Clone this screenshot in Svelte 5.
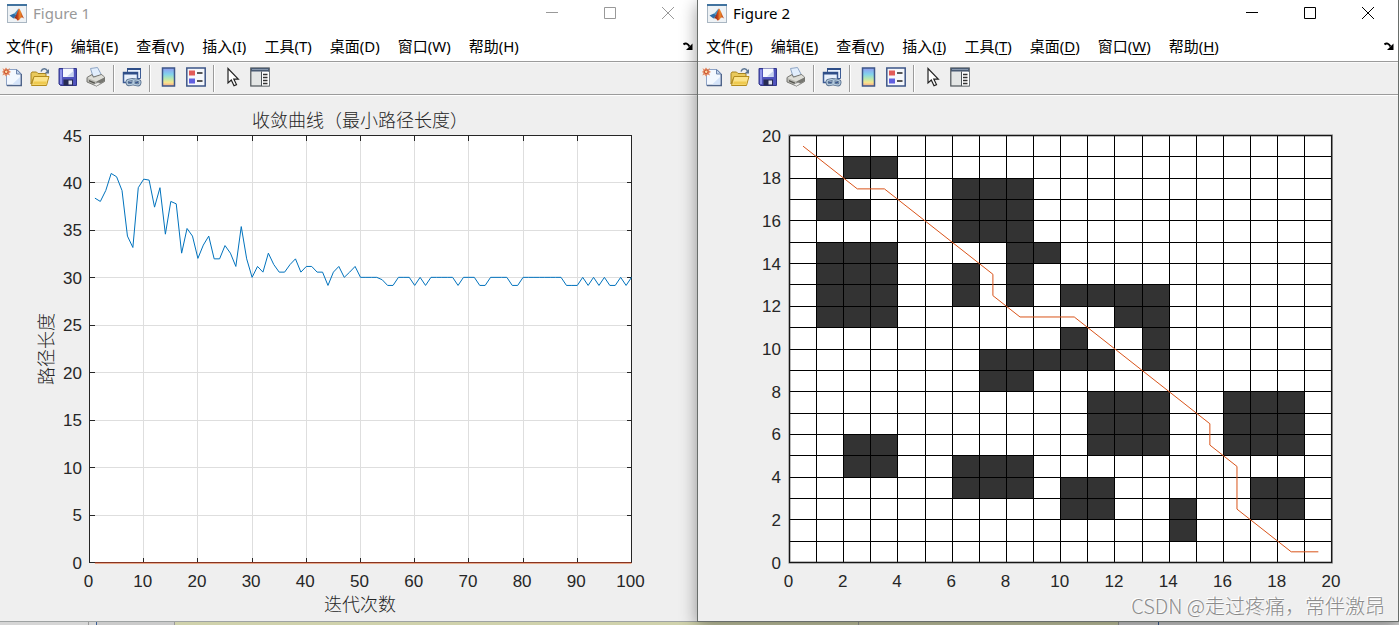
<script>
  const menus = [
    ['文件', 'F'], ['编辑', 'E'], ['查看', 'V'], ['插入', 'I'],
    ['工具', 'T'], ['桌面', 'D'], ['窗口', 'W'], ['帮助', 'H']
  ];

  const tools = [
    ['new', '新建'], ['open', '打开'], ['save', '保存'], ['print', '打印'], null,
    ['link', '链接绘图'], null,
    ['colorbar', '颜色栏'], ['legend', '图例'], null,
    ['cursor', '编辑绘图'], ['panel', '属性检查器']
  ];

  const windows = [
    { id: 1, title: 'Figure 1', active: false },
    { id: 2, title: 'Figure 2', active: true }
  ];

  // Best path length after each iteration
  const lengths = [
    38.4, 38.05, 39.2, 41, 40.65, 39.2, 34.4, 33.2, 39.5, 40.4,
    40.3, 37.45, 39.5, 34.6, 38.05, 37.8, 32.6, 35.2, 34.4, 32.05,
    33.45, 34.4, 32, 32, 33.4, 32.6, 31.2, 35.4, 32, 30.05,
    31.2, 30.6, 32.6, 31.4, 30.6, 30.6, 31.4, 32, 30.6, 31.2,
    31.2, 30.6, 30.6, 29.2, 30.6, 31.2, 30.05, 30.6, 31.2, 30.05,
    30.05, 30.05, 30.05, 29.8, 29.2, 29.2, 30.05, 30.05, 30.05, 29.2,
    30.05, 29.2, 30.05, 30.05, 30.05, 30.05, 30.05, 29.2, 30.05, 30.05,
    30.05, 29.2, 29.2, 30.05, 30.05, 30.05, 30.05, 29.2, 29.2, 30.05,
    30.05, 30.05, 30.05, 30.05, 30.05, 30.05, 30.05, 29.2, 29.2, 29.2,
    30.05, 29.2, 30.05, 29.2, 30.05, 29.2, 29.2, 30.05, 29.2, 30.05
  ];

  // Obstacles as [x, y, width, height] in map cells
  const blocks = [
    [2, 18, 2, 1], [1, 16, 1, 2], [2, 16, 1, 1], [1, 11, 3, 4], [2, 4, 2, 2],
    [6, 15, 3, 3], [8, 12, 1, 3], [9, 14, 1, 1], [6, 12, 1, 2], [10, 12, 4, 1],
    [12, 11, 2, 1], [13, 9, 1, 2], [10, 10, 1, 1], [7, 9, 5, 1], [7, 8, 2, 1],
    [11, 5, 3, 3], [16, 5, 3, 3], [6, 3, 3, 2], [10, 2, 2, 2], [14, 1, 1, 2],
    [17, 2, 2, 2]
  ];

  const route = [
    [0.5, 19.5], [2.5, 17.5], [3.5, 17.5], [7.5, 13.5], [7.5, 12.5], [8.5, 11.5],
    [10.5, 11.5], [15.5, 6.5], [15.5, 5.5], [16.5, 4.5], [16.5, 2.5], [18.5, 0.5], [19.5, 0.5]
  ];

  const range = (n, step = 1) => Array.from({ length: n }, (_, i) => i * step);

  const TOP = 39.5;
  const BOTTOM = 466.5;
  const H = BOTTOM - TOP;

  const ax = (v) => 89.5 + v * 5.42;
  const ay = (v) => BOTTOM - (v * H) / 45;
  const bx = (v) => 91.5 + v * 27.12;
  const by = (v) => BOTTOM - (v * H) / 20;

  const curve = lengths.map((v, i) => `${ax(i + 1)},${ay(v)}`).join(' ');
  const track = route.map(([x, y]) => `${bx(x)},${by(y)}`).join(' ');
</script>

{#snippet icon(name)}
  <svg class="icon" viewBox="0 0 20 20" aria-hidden="true">
    {#if name === 'new'}
      <path d="M4.500 2.500H15L19 6.500V18.500H4.500z" fill="#f3f8ff" stroke="#8ea3c6" />
      <path d="M5 18.500H19.500V7" fill="none" stroke="#4f6489" stroke-width="1.500" />
      <path d="M14.500 2.500V7H19z" fill="#c3d5ee" stroke="#6f86ae" />
      <path d="M10 17.500H18V10z" fill="#d5e4fa" />
      <path d="M0.500 1l2 1.500L4 .5l1.500 2L8 1 7 3.500 9 5 7 6l1 2.500L5.500 7.500 4 9.500 2.500 7.500 .3 8.500 1.500 6 0 5l1.500-1.500z" fill="#e38a62" />
      <circle cx="4.200" cy="4.800" r="1.800" fill="#fbd7a0" stroke="#cb4e2c" />
    {:else if name === 'open'}
      <path d="M1 6.500l1-1.500h4.500L8 6.500h8V10H4L1 17z" fill="#e9c95c" stroke="#a8841f" />
      <path d="M1.500 18.500L4 9.500h15l-2.500 9z" fill="#fbe389" stroke="#b48c1c" />
      <path d="M3 17.500h13l.7-3H3.800z" fill="#efca50" />
      <path d="M11 4.500C12.500 1 16 1 17.500 4" fill="none" stroke="#5c7593" stroke-width="1.500" />
      <path d="M19 2v4.500h-4.500z" fill="#5c7593" />
    {:else if name === 'save'}
      <path d="M1 1.500h17.500v17H2.500L1 17z" fill="#5054bd" stroke="#33378c" />
      <path d="M2 2.500h2V17H2z" fill="#8c91e8" />
      <path d="M5 1.500h10.500V10H5z" fill="#f5f8ff" />
      <path d="M9 9.500L15.500 4V10z" fill="#c7d3f0" />
      <path d="M5.500 12.500H15v6H5.500z" fill="#272b52" />
      <path d="M10.500 13.500h3.500v4h-3.500z" fill="#dfe3ef" />
    {:else if name === 'print'}
      <path d="M4.500 1.500l7-1 4 7.500-8 3z" fill="#e2eefc" stroke="#8ea5c4" />
      <path d="M1 10.500l5-3 1.500 2.500 8-2.500 3 2.500v4.500l-8 4.500-9.500-4z" fill="#b9b9b3" stroke="#777772" />
      <path d="M1.500 11l9 3.500 8-4-3-2.500-8 3-2-2.500z" fill="#deded8" />
      <path d="M10.500 14.500v4l8-4.500v-3.500z" fill="#777772" />
      <path d="M3 13l6 2.500v1.500L3 14.500z" fill="#55554f" />
      <path d="M7 17.500l5-2 3 1-4.500 2.500z" fill="#efefec" stroke="#888" stroke-width=".5" />
    {:else if name === 'link'}
      <path d="M5.500 1.500h13v10h-13z" fill="#e8f0fc" stroke="#3c5b94" />
      <path d="M5 1h14v2H5z" fill="#2f4e88" />
      <path d="M1.500 5.500h14v10h-14z" fill="#e8f0fc" stroke="#3c5b94" stroke-width="1.500" />
      <path d="M1 5h15v2.500H1z" fill="#2f4e88" />
      <g fill="none" stroke="#59718f" stroke-width="3">
        <rect x="5" y="13" width="7" height="4.500" rx="2.200" transform="rotate(-12 8 15)" />
        <rect x="11" y="13" width="7" height="4.500" rx="2.200" transform="rotate(12 14 15)" />
      </g>
      <g fill="none" stroke="#b5cbdf" stroke-width="1.300">
        <rect x="5" y="13" width="7" height="4.500" rx="2.200" transform="rotate(-12 8 15)" />
        <rect x="11" y="13" width="7" height="4.500" rx="2.200" transform="rotate(12 14 15)" />
      </g>
    {:else if name === 'colorbar'}
      <rect x="4.500" y="1" width="12" height="18" fill="url(#spectrum)" stroke="#3d5688" stroke-width="1.500" />
    {:else if name === 'legend'}
      <rect x=".8" y="1" width="18.400" height="18" fill="#f5f7fb" stroke="#3d5688" stroke-width="1.500" />
      <rect x="3" y="3.500" width="6" height="5" fill="#e15a58" />
      <rect x="3" y="11.500" width="6" height="5" fill="#605fe0" />
      <path d="M11 6h5.500M11 14h5.500" stroke="#222" stroke-width="1.500" />
    {:else if name === 'cursor'}
      <path d="M6 1.500V16l3.300-3 2.700 5.800 2.500-1.200-2.700-5.500h4.500z" fill="#fff" stroke="#222" stroke-width="1.200" />
    {:else}
      <rect x=".8" y="1" width="18.400" height="18" fill="#e4e6e5" stroke="#4c5358" stroke-width="1.200" />
      <path d="M1 1h18v3.500H1z" fill="#4a5b72" />
      <path d="M2 2h16v1H2z" fill="#8797ad" />
      <path d="M11.500 4.500V19" stroke="#4c5358" />
      <path d="M12 5h7v13.500h-7z" fill="#fff" />
      <path d="M13 7.500h4.500M13 10.500h4.500M13 13.500h4.500M13 16.500h4.500" stroke="#333" stroke-width="1.300" />
    {/if}
  </svg>
{/snippet}

{#snippet convergence()}
  <svg class="plot" viewBox="0 0 697 525" role="img" aria-label="收敛曲线">
    <rect x="89.500" y={TOP} width="542" height={H} fill="#fff" />
    <g class="crisp grid">
      {#each range(9) as i}
        <path d="M{ax(10 * i + 10)} {TOP}V{BOTTOM}" />
      {/each}
      {#each range(8) as i}
        <path d="M89.500 {ay(5 * i + 5)}H631.500" />
      {/each}
    </g>
    <g class="crisp axis">
      <rect x="89.500" y={TOP} width="542" height={H} />
      {#each range(9) as i}
        <path d="M{ax(10 * i + 10)} {TOP}v5M{ax(10 * i + 10)} {BOTTOM}v-5" />
      {/each}
      {#each range(8) as i}
        <path d="M89.500 {ay(5 * i + 5)}h5M631.500 {ay(5 * i + 5)}h-5" />
      {/each}
    </g>
    <path d="M{ax(1)} 466.500H631.500" stroke="#863522" />
    <path d="M{ax(1)} 467.500H631.500" stroke="#e9a88a" />
    <polyline points={curve} class="curve" />
    {#each range(11, 10) as v}
      <text class="tick mid" x={ax(v) - 1} y="491">{v}</text>
    {/each}
    {#each range(10, 5) as v}
      <text class="tick end" x="82" y={ay(v) + 6}>{v}</text>
    {/each}
    <text class="label mid" x="360" y="31">收敛曲线（最小路径长度）</text>
    <text class="label mid" x="360" y="515">迭代次数</text>
    <text class="label mid" transform="translate(53 253) rotate(-90)">路径长度</text>
  </svg>
{/snippet}

{#snippet gridMap()}
  <svg class="plot" viewBox="0 0 700 525" role="img" aria-label="路径规划地图">
    <rect x={bx(0)} y={TOP} width={bx(20) - bx(0)} height={H} fill="#fff" />
    {#each blocks as [x, y, w, h]}
      <rect class="crisp" x={bx(x)} y={by(y + h)} width={bx(x + w) - bx(x)} height={by(y) - by(y + h)} fill="#333" />
    {/each}
    <g class="crisp cells">
      {#each range(21) as i}
        <path d="M{bx(i)} {TOP}V{BOTTOM}M{bx(0)} {by(i)}H{bx(20)}" />
      {/each}
    </g>
    <rect x={bx(0)} y={TOP} width={bx(20) - bx(0)} height={H} fill="none" stroke="#262626" stroke-opacity=".6" stroke-width="2" />
    <polyline points={track} class="track" />
    {#each range(11, 2) as v}
      <text class="tick mid" x={bx(v) - 1} y="491">{v}</text>
      <text class="tick end" x="83" y={by(v) + 6}>{v}</text>
    {/each}
  </svg>
{/snippet}

<svg class="defs" aria-hidden="true">
  <defs>
    <linearGradient id="spectrum" x1="0" y1="0" x2="0" y2="1">
      <stop offset="0" stop-color="#8f9af0" />
      <stop offset=".35" stop-color="#82d3ec" />
      <stop offset=".6" stop-color="#b9e8ae" />
      <stop offset=".8" stop-color="#f7e58d" />
      <stop offset="1" stop-color="#f2a58d" />
    </linearGradient>
    <linearGradient id="flame" x1="0" y1="0" x2="1" y2="0">
      <stop offset="0" stop-color="#5b1a17" />
      <stop offset=".4" stop-color="#c8431c" />
      <stop offset=".6" stop-color="#f08a2a" />
      <stop offset="1" stop-color="#a82a14" />
    </linearGradient>
  </defs>
</svg>

<main>
  <div class="windows">
    {#each windows as win (win.id)}
      <section class="window" class:active={win.active} aria-label={win.title}>
        <header>
          <svg class="logo" viewBox="0 0 20 19" aria-hidden="true">
            <rect x=".5" y=".5" width="19" height="18" fill="#eef2f5" stroke="#a9b6c2" />
            <path d="M0 0h20v2H0z" fill="#41739f" />
            <path d="M2.500 11.500L7 9.500l2.500 2-3 3z" fill="#2d6da8" />
            <path d="M7 9.500C9 8.500 10.500 5 12 4.500L9.500 12z" fill="#4f93bd" />
            <path d="M6.500 14.500C9 13 10.500 7 12 4.500c1.500 1 3 6.500 5.300 10.200-1.700-1.500-3-1.700-4.300.3-1 1.500-1.800 1.500-2.600 1.500-.9-1.500-2-2.500-3.900-2z" fill="url(#flame)" />
          </svg>
          <span class="title">{win.title}</span>
          <div class="caption">
            <button aria-label="最小化"><svg viewBox="0 0 12 12"><path d="M0 5.500h12" /></svg></button>
            <button aria-label="最大化"><svg viewBox="0 0 12 12"><path d="M.5.5h11v11H.5z" /></svg></button>
            <button aria-label="关闭"><svg viewBox="0 0 12 12"><path d="M0 0l12 12M12 0L0 12" /></svg></button>
          </div>
        </header>
        <nav>
          {#each menus as [name, key]}
            <button>{name}(<span class="key">{key}</span>)</button>
          {/each}
          <svg class="dock" viewBox="0 0 10 8" aria-hidden="true">
            <path d="M.5 2.500C2.500 .5 4.800 1.500 6.500 4.500" fill="none" stroke="#000" stroke-width="2" />
            <path d="M9.500 1.500V8H3z" />
          </svg>
        </nav>
        <div class="toolbar">
          {#each tools as tool}
            {#if tool}
              <button aria-label={tool[1]}>{@render icon(tool[0])}</button>
            {:else}
              <span class="sep"></span>
            {/if}
          {/each}
        </div>
        <div class="canvas">
          {#if win.id === 1}{@render convergence()}{:else}{@render gridMap()}{/if}
        </div>
        {#if win.active}
          <p class="watermark">CSDN @走过疼痛，常伴激昂</p>
        {/if}
      </section>
    {/each}
  </div>
  <div class="desktop">
    <i class="left"></i><i class="tab"></i><i class="gap"></i><i class="sheet"></i><i class="sheet wide"></i><i class="side"></i><i class="rest"></i>
  </div>
</main>

<style>
  :global(body) {
    margin: 0;
    background: #d6d6d6;
  }

  main {
    font-family: 'Noto Sans', 'Noto Sans CJK SC', sans-serif;
    font-size: 15px;
    color: #000;
    overflow: hidden;
  }

  button {
    border: 0;
    padding: 0;
    background: none;
    font: inherit;
    color: inherit;
  }

  .defs {
    position: absolute;
    width: 0;
    height: 0;
  }

  .windows {
    display: grid;
    grid-template-columns: 697fr 702fr;
  }

  .window {
    --inset: 0px;
    display: flex;
    flex-direction: column;
    position: relative;
    background: #fff;
    border-bottom: 1px solid #9fa3a3;
  }

  .window.active {
    --inset: 2px;
    border: 1px solid #696e6b;
    border-top: 0;
    box-shadow: 0 4px 16px rgba(0, 0, 0, 0.4);
  }

  header {
    display: flex;
    align-items: center;
    box-sizing: border-box;
    height: 28px;
    padding: 0 0 2px calc(7px + var(--inset));
    color: #999;
  }

  .active header {
    padding-right: 1px;
    color: #000;
  }

  .logo {
    width: 20px;
    height: 19px;
  }

  .title {
    margin-left: 6px;
    line-height: 26px;
  }

  .caption {
    display: flex;
    margin-left: auto;
  }

  .caption button {
    display: flex;
    align-items: center;
    justify-content: center;
    width: 58px;
    height: 26px;
  }

  .caption svg {
    width: 12px;
    height: 12px;
    fill: none;
    stroke: currentColor;
  }

  nav {
    display: flex;
    align-items: center;
    gap: 18px;
    box-sizing: border-box;
    height: 34px;
    padding: 2px 4px 0 calc(6px + var(--inset));
    border-bottom: 1px solid #9b9b9b;
  }

  nav button {
    line-height: 20px;
    white-space: nowrap;
  }

  .active .key {
    text-decoration: underline;
    text-underline-offset: 2px;
  }

  .dock {
    width: 10px;
    height: 8px;
    margin-left: auto;
  }

  .toolbar {
    display: flex;
    align-items: center;
    gap: 8px;
    box-sizing: border-box;
    height: 33px;
    padding: 0 2px 3px calc(2px + var(--inset));
    background: #efefef;
    border-top: 1px solid #fafafa;
    border-bottom: 1px solid #9b9b9b;
  }

  .toolbar button,
  .icon {
    display: block;
    width: 20px;
    height: 20px;
  }

  .sep {
    width: 1px;
    height: 27px;
    margin: 3px -1px 0;
    background: #9b9b9b;
    border-right: 1px solid #fff;
  }

  .canvas {
    background: #efefef;
    border-top: 1px solid #fff;
  }

  .plot {
    display: block;
    width: 100%;
    font-family: 'Liberation Sans', Arial, sans-serif;
  }

  .crisp {
    shape-rendering: crispEdges;
  }

  .grid {
    stroke: #dedede;
  }

  .axis {
    fill: none;
    stroke: #262626;
  }

  .cells {
    stroke: #000;
  }

  .curve,
  .track {
    fill: none;
    stroke-width: 1;
    stroke: #0072bd;
  }

  .track {
    stroke: #d95319;
  }

  .tick {
    font-size: 17px;
    fill: #262626;
  }

  .label {
    font-family: 'Noto Sans CJK SC', sans-serif;
    font-size: 18px;
    font-weight: 300;
    fill: #262626;
  }

  .mid {
    text-anchor: middle;
  }

  .end {
    text-anchor: end;
  }

  .watermark {
    position: absolute;
    right: 13px;
    bottom: 1px;
    margin: 0;
    font-family: 'Noto Sans CJK SC', sans-serif;
    font-size: 20px;
    font-weight: 300;
    line-height: 28px;
    color: #8c8c8c;
    text-shadow: -1px -1px 0 #fff;
  }

  .desktop {
    display: flex;
    height: 3px;
  }

  .desktop i {
    box-sizing: border-box;
    border-right: 1px solid #9a9a9a;
    background: #d6d6d6;
  }

  .desktop .left {
    flex: 88;
  }

  .desktop .tab {
    flex: 7;
    border-color: #3b5f96;
  }

  .desktop .gap {
    flex: 78;
    background: #cbcbcb;
  }

  .desktop .sheet {
    flex: 686;
    background: #d0d2ac;
  }

  .desktop .wide {
    flex: 260;
  }

  .desktop .side {
    flex: 39;
    border-color: #3b5f96;
  }

  .desktop .rest {
    flex: 241;
    border: 0;
  }
</style>
